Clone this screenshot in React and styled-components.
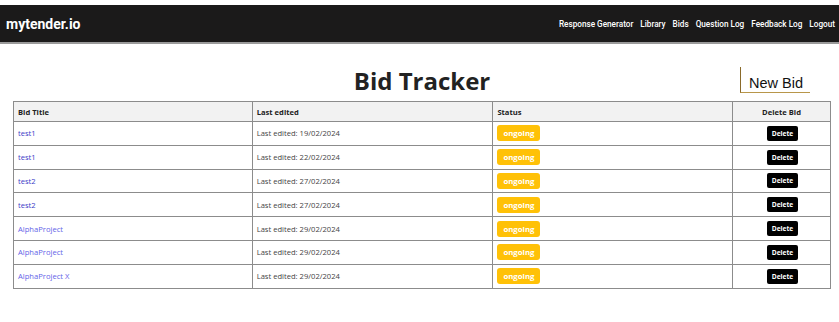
import React from "react";
import styled, { createGlobalStyle } from "styled-components";

const Global = createGlobalStyle`
  body { margin: 0; background: #fff; font-family: "Open Sans", "Noto Sans", sans-serif; }
`;

const Page = styled.div`
  padding-top: 5px;
`;

const Nav = styled.nav`
  height: 37px;
  background: #1b1a1a;
  border-bottom: 2px solid #9a9a9a;
  display: flex;
  align-items: center;
  justify-content: space-between;
  padding: 0 4px 0 6px;
`;

const Logo = styled.div`
  color: #fff;
  font-family: Roboto, sans-serif;
  font-weight: 700;
  font-size: 14px;
`;

const Links = styled.div`
  display: flex;
  gap: 7px;
`;

const NavLink = styled.a`
  color: #fff;
  font-family: Roboto, sans-serif;
  font-weight: 500;
  font-size: 8.2px;
  text-decoration: none;
`;

const Main = styled.main`
  padding: 0 8px 0 13px;
`;

const Header = styled.div`
  display: grid;
  grid-template-columns: 1fr auto 1fr;
  align-items: center;
  height: 45px;
  padding-top: 12px;
`;

const Title = styled.h1`
  grid-column: 2;
  margin: 0;
  font-family: "Open Sans", sans-serif;
  font-weight: 700;
  font-size: 24px;
  color: #222;
  padding-top: 3px;
`;

const NewBid = styled.button`
  justify-self: end;
  margin-right: 21px;
  margin-top: 3px;
  background: #fff;
  border: none;
  border-left: 1px solid #8a6a2a;
  border-bottom: 1px solid #b8964a;
  font-family: "Liberation Sans", Arial, sans-serif;
  font-size: 14.5px;
  color: #111;
  padding: 8px 0 1px 8px;
  height: 26px;
  width: 70px;
  text-align: left;
  white-space: nowrap;
`;

const Table = styled.table`
  width: 100%;
  border-collapse: collapse;
  font-family: "Open Sans", sans-serif;
  font-size: 7.6px;
  color: #444;
`;

const Th = styled.th`
  background: #f2f2f2;
  border: 1px solid #8c8c8c;
  font-weight: 700;
  color: #222;
  text-align: ${(p) => (p.$center ? "center" : "left")};
  padding: 0 4px;
  height: 19px;
`;

const Td = styled.td`
  border: 1px solid #8c8c8c;
  padding: 0 4px;
  height: 22.8px;
  text-align: ${(p) => (p.$center ? "center" : "left")};
`;

const BidLink = styled.a`
  color: ${(p) => (p.$light ? "#6464e8" : "#3c3cc8")};
  font-weight: 500;
  text-decoration: none;
`;

const Badge = styled.span`
  display: inline-block;
  background: #ffc107;
  color: #fff;
  font-weight: 700;
  font-size: 7.8px;
  border-radius: 3px;
  padding: 3px 6px;
  line-height: 10px;
`;

const DeleteBtn = styled.button`
  background: #000;
  color: #fff;
  border: none;
  border-radius: 2px;
  font-family: "Open Sans", sans-serif;
  font-weight: 700;
  font-size: 6.6px;
  padding: 0 5px;
  height: 15px;
  margin-left: 2px;
`;

const rows = [
  ["test1", "19/02/2024", false],
  ["test1", "22/02/2024", false],
  ["test2", "27/02/2024", false],
  ["test2", "27/02/2024", false],
  ["AlphaProject", "29/02/2024", true],
  ["AlphaProject", "29/02/2024", true],
  ["AlphaProject X", "29/02/2024", true],
];

export default function App() {
  return (
    <Page>
      <Global />
      <Nav>
        <Logo>mytender.io</Logo>
        <Links>
          {["Response Generator", "Library", "Bids", "Question Log", "Feedback Log", "Logout"].map((l) => (
            <NavLink key={l} href="#">{l}</NavLink>
          ))}
        </Links>
      </Nav>
      <Main>
        <Header>
          <Title>Bid Tracker</Title>
          <NewBid>New Bid</NewBid>
        </Header>
        <Table>
          <colgroup>
            <col style={{ width: "239px" }} />
            <col style={{ width: "241px" }} />
            <col style={{ width: "240px" }} />
            <col style={{ width: "98px" }} />
          </colgroup>
          <thead>
            <tr>
              <Th>Bid Title</Th>
              <Th>Last edited</Th>
              <Th>Status</Th>
              <Th $center>Delete Bid</Th>
            </tr>
          </thead>
          <tbody>
            {rows.map(([t, d, light], i) => (
              <tr key={i}>
                <Td><BidLink href="#" $light={light}>{t}</BidLink></Td>
                <Td>Last edited: {d}</Td>
                <Td><Badge>ongoing</Badge></Td>
                <Td $center><DeleteBtn>Delete</DeleteBtn></Td>
              </tr>
            ))}
          </tbody>
        </Table>
      </Main>
    </Page>
  );
}
